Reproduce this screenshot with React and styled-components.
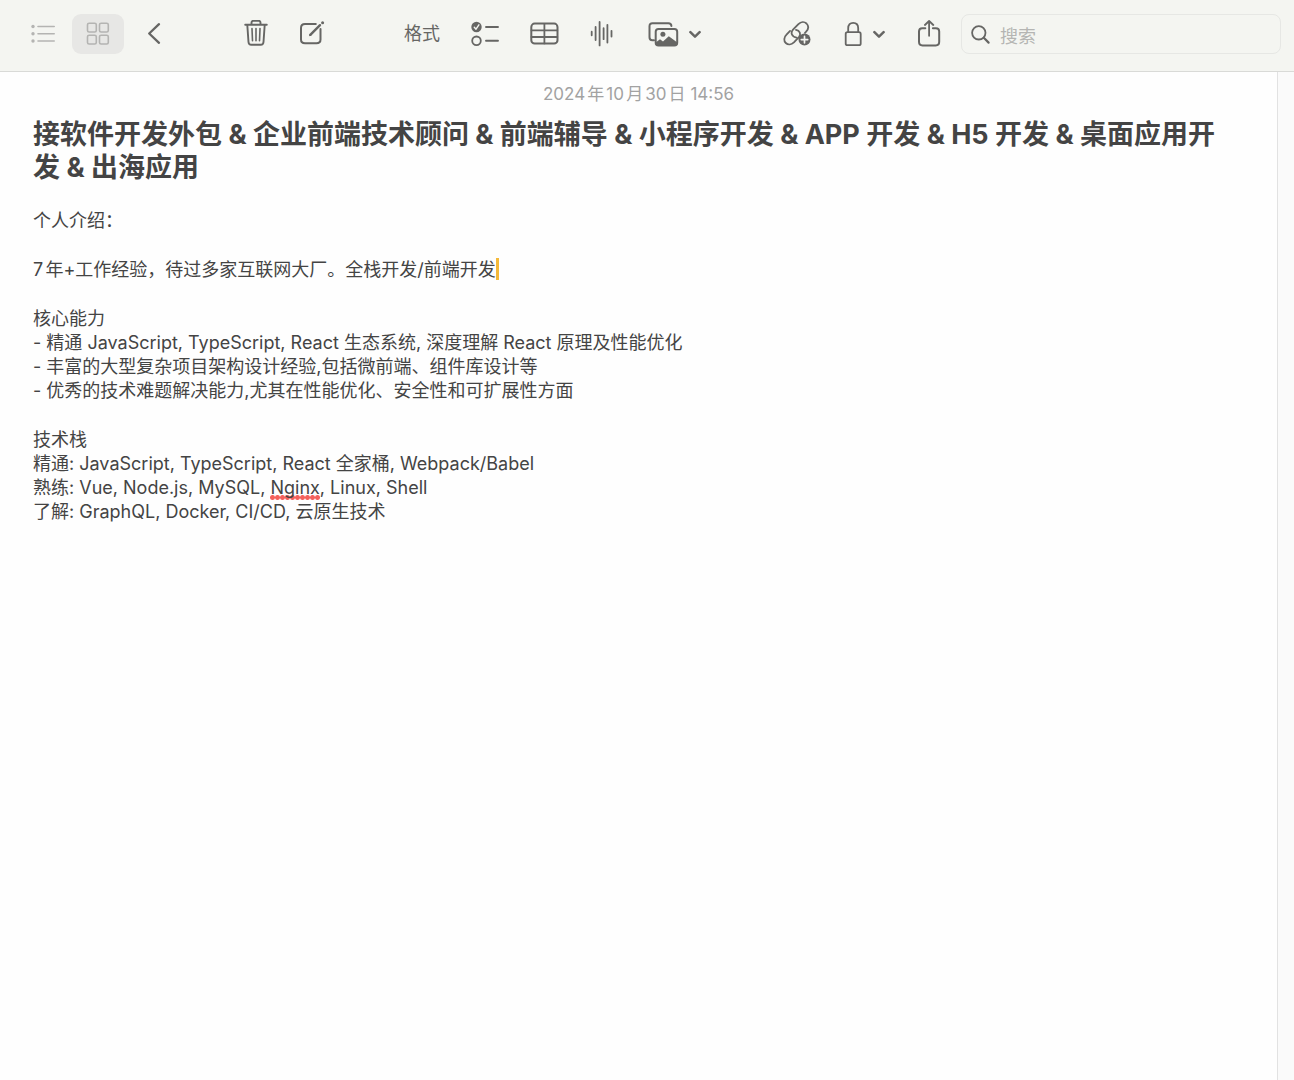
import React from "react";
import styled, { createGlobalStyle } from "styled-components";

const GlobalStyle = createGlobalStyle`
  *, *::before, *::after { box-sizing: border-box; }
  body {
    margin: 0;
    background: #fff;
    color: #444;
    font-family: Inter, "Noto Sans CJK SC", sans-serif;
    font-size: 18px;
    line-height: 24px;
    text-autospace: normal;
  }
`;

const Window = styled.div`
  min-height: 100vh;
  display: flex;
  flex-direction: column;
`;

const Toolbar = styled.header`
  display: flex;
  align-items: center;
  gap: 6px;
  padding: 14px 13px 17px 17px;
  background: #f4f5f1;
  border-bottom: 1px solid #d9dad7;
`;

const Tools = styled.nav`
  flex: 1;
  display: flex;
  gap: 51px;
`;

const Group = styled.div`
  display: flex;
  gap: ${(p) => (p.$end ? "4px" : "3px")};
  margin-left: ${(p) => (p.$end ? "auto" : "0")};
`;

const ToolButton = styled.button`
  display: flex;
  align-items: center;
  justify-content: center;
  gap: 10px;
  height: 40px;
  padding: 0 14px;
  border: 0;
  border-radius: 9px;
  background: ${(p) => (p.$active ? "#e7e7e5" : "transparent")};
  color: ${(p) => (p.$muted ? "#b4b4b2" : "#666664")};
  font: inherit;
`;

const Svg = styled.svg`
  display: block;
  flex: none;
  fill: none;
  stroke: currentColor;
  stroke-width: 2;
  stroke-linecap: round;
  stroke-linejoin: round;
`;

const SearchBox = styled.label`
  display: flex;
  align-items: center;
  gap: 9px;
  width: 320px;
  height: 40px;
  padding: 0 9px;
  border: 1px solid #e6e7e4;
  border-radius: 8px;
  color: #666664;
`;

const SearchInput = styled.input`
  flex: 1;
  min-width: 0;
  padding: 5px 0 0;
  border: 0;
  outline: 0;
  background: transparent;
  color: #444;
  font: inherit;
  &::placeholder { color: #b5b5b3; opacity: 1; }
`;

const Body = styled.div`
  flex: 1;
  display: flex;
`;

const Note = styled.main`
  flex: 1;
  padding: 10px 33px 32px;
  background: #fefefe;
`;

const Gutter = styled.aside`
  width: 17px;
  border-left: 1px solid #e2e2e2;
  background: #fafafa;
`;

const Stamp = styled.time`
  display: block;
  text-align: center;
  color: #a2a2a2;
  font-size: 17px;
`;

const Title = styled.h1`
  margin: 12px 0 25px;
  padding-right: 12px;
  font-size: 27px;
  line-height: 33px;
  font-weight: 700;
`;

const Section = styled.section`
  margin-bottom: 25px;
`;

const Line = styled.p`
  margin: 0;
`;

const Caret = styled.span`
  display: inline-block;
  width: 3px;
  height: 22px;
  vertical-align: top;
  background: #f4b93a;
`;

const Misspelled = styled.span`
  padding-bottom: 2px;
  background: radial-gradient(circle, #f4615c 2px, transparent 3px) left bottom / 5px 5px repeat-x;
`;

function Icon({ w = 28, h = 28, x = 0, children }) {
  return (
    <Svg width={w} height={h} viewBox={`${x} 0 ${w} ${h}`} aria-hidden="true">
      {children}
    </Svg>
  );
}

const ListIcon = () => (
  <Icon w={24}>
    <g fill="currentColor" stroke="none">
      <circle cx="2" cy="6.5" r="1.7" /><circle cx="2" cy="13.7" r="1.7" /><circle cx="2" cy="21" r="1.7" />
    </g>
    <path d="M7 6.5H23.2M7 13.7H23.2M7 21H23.2" style={{ strokeWidth: 1.6 }} />
  </Icon>
);

const GridIcon = () => (
  <Icon w={24}>
    <g style={{ strokeWidth: 1.6 }}>
      <rect x="1.5" y="3.2" width="8.8" height="8.8" rx="1.6" />
      <rect x="13.5" y="3.2" width="8.8" height="8.8" rx="1.6" />
      <rect x="1.5" y="15.2" width="8.8" height="8.8" rx="1.6" />
      <rect x="13.5" y="15.2" width="8.8" height="8.8" rx="1.6" />
    </g>
  </Icon>
);

const BackIcon = () => (
  <Icon w={24}><path d="M18 4.2 8.2 13.5 18 22.8" style={{ strokeWidth: 2.3 }} /></Icon>
);

const TrashIcon = () => (
  <Icon w={24}>
    <path d="M1.2 4.8H22.8M7.5 4.5V2.7C7.5 1.4 8.2.8 9.4.8H14.6C15.8.8 16.5 1.4 16.5 2.7V4.5M3.3 5 4.5 22C4.6 23.9 5.6 24.8 7.3 24.8H16.7C18.4 24.8 19.4 23.9 19.5 22L20.7 5" style={{ strokeWidth: 1.9 }} />
    <path d="M8 8.6 8.5 20.8M12 8.6V20.8M16 8.6 15.5 20.8" style={{ strokeWidth: 1.6 }} />
  </Icon>
);

const ComposeIcon = () => (
  <Icon w={26}>
    <path d="M16.8 4H6C3.4 4 2 5.4 2 8V19.5C2 22.1 3.4 23.3 6 23.3H17.5C20.1 23.3 21.5 22.1 21.5 19.5V9" />
    <path d="M11.3 14.8 21 5.2" style={{ strokeWidth: 2.4 }} />
    <path d="M10.2 16.2 10.8 13.8 12.6 15.4Z" fill="currentColor" stroke="none" />
    <circle cx="23.6" cy="2.7" r="1.5" fill="currentColor" stroke="none" />
  </Icon>
);

const ChecklistIcon = () => (
  <Icon>
    <circle cx="5.5" cy="7" r="5.2" fill="currentColor" stroke="none" />
    <path d="M3.3 7.3 5 9.2 7.9 4.8" stroke="#f4f5f1" style={{ strokeWidth: 1.4 }} />
    <circle cx="5.5" cy="20.8" r="4.3" style={{ strokeWidth: 1.8 }} />
    <path d="M15 7H27M15 20.8H27" style={{ strokeWidth: 1.9 }} />
  </Icon>
);

const TableIcon = () => (
  <Icon w={29}>
    <rect x="1.3" y="3.6" width="26.2" height="20" rx="3.4" />
    <path d="M1.5 10.3H27.3M1.5 17H27.3M14.4 3.8V23.4" style={{ strokeWidth: 1.8 }} />
  </Icon>
);

const WaveIcon = () => (
  <Icon w={24}>
    <path d="M1.7 11.7V15.3M5.6 7V20M9.6 2V25.4M13.6 8.2V19.2M17.4 4.8V22.6M21.5 10.8V16.5" style={{ strokeWidth: 1.8 }} />
  </Icon>
);

const MediaIcon = () => (
  <Icon w={34} x={-3}>
    <path d="M6 20.2H4.4C2.5 20.2 1.5 19.2 1.5 17.3V6.2C1.5 4.3 2.5 3.3 4.4 3.3H20.4C22.3 3.3 23.3 4.2 23.4 6" />
    <rect x="7.7" y="8.9" width="21.5" height="16.6" rx="2.8" />
    <circle cx="14.9" cy="14.3" r="2.5" fill="currentColor" stroke="none" />
    <path d="M8 22.3 12 19.2 15 21.4 20.8 16.2 29 22.3V23.5C29 25 28.2 25.7 27 25.7H10C8.8 25.7 8 25 8 23.5Z" fill="currentColor" stroke="none" />
  </Icon>
);

const ChevronIcon = () => (
  <Icon w={12}><path d="M1.4 12.2 6 16.6 10.6 12.2" style={{ strokeWidth: 2.5 }} /></Icon>
);

const LinkIcon = () => (
  <Icon>
    <path d="M13.6 17.6C9.1 17.2 7.1 13 10 9.7L15.4 4.1C18 1.6 21.3 1.4 23.5 3.5C25.7 5.8 25.6 9 23.1 11.7L22 12.8" style={{ strokeWidth: 1.8 }} />
    <path d="M7.1 10.9 3.5 14.7C.8 17.4.6 20.9 2.8 23C5 25.1 8.3 24.9 10.9 22.4L15.9 17.2C18.5 14.2 16.7 10.4 13 9.8" style={{ strokeWidth: 1.8 }} />
    <circle cx="21.5" cy="19.6" r="6" fill="currentColor" stroke="none" />
    <path d="M21.5 16.4V22.8M18.3 19.6H24.7" stroke="#f4f5f1" style={{ strokeWidth: 1.7 }} />
  </Icon>
);

const LockIcon = () => (
  <Icon w={20}>
    <rect x="2.7" y="12.2" width="15" height="13" rx="1.8" style={{ strokeWidth: 1.8 }} />
    <path d="M5.2 12V8.3C5.2 4.8 7.2 2.8 10.2 2.8S15.2 4.8 15.2 8.3V12" style={{ strokeWidth: 1.8 }} />
  </Icon>
);

const ShareIcon = () => (
  <Icon w={24}>
    <path d="M8.3 8.3H5.3C3 8.3 2 9.3 2 11.6V21.8C2 24.3 3.2 25.4 5.5 25.4H18.7C21 25.4 22.2 24.3 22.2 21.8V11.6C22.2 9.3 21.2 8.3 18.9 8.3H15.9" />
    <path d="M12.1 15.8V1.3M7.9 5 12.1 1 16.3 5" style={{ strokeWidth: 1.8 }} />
  </Icon>
);

const SearchIcon = () => (
  <Icon w={20}>
    <circle cx="7.8" cy="12.8" r="6.7" style={{ strokeWidth: 1.8 }} />
    <path d="M12.8 17.8 17.6 22.6" style={{ strokeWidth: 2.2 }} />
  </Icon>
);

export default function App() {
  return (
    <Window>
      <GlobalStyle />
      <Toolbar>
        <Tools>
          <Group>
            <ToolButton type="button" $muted aria-label="列表"><ListIcon /></ToolButton>
            <ToolButton type="button" $muted $active aria-label="网格"><GridIcon /></ToolButton>
            <ToolButton type="button" aria-label="返回"><BackIcon /></ToolButton>
          </Group>
          <Group>
            <ToolButton type="button" aria-label="删除"><TrashIcon /></ToolButton>
            <ToolButton type="button" aria-label="新建备忘录"><ComposeIcon /></ToolButton>
          </Group>
          <Group>
            <ToolButton type="button">格式</ToolButton>
            <ToolButton type="button" aria-label="核对清单"><ChecklistIcon /></ToolButton>
            <ToolButton type="button" aria-label="表格"><TableIcon /></ToolButton>
            <ToolButton type="button" aria-label="录音"><WaveIcon /></ToolButton>
            <ToolButton type="button" aria-label="媒体"><MediaIcon /><ChevronIcon /></ToolButton>
          </Group>
          <Group $end>
            <ToolButton type="button" aria-label="链接"><LinkIcon /></ToolButton>
            <ToolButton type="button" aria-label="锁定"><LockIcon /><ChevronIcon /></ToolButton>
            <ToolButton type="button" aria-label="共享"><ShareIcon /></ToolButton>
          </Group>
        </Tools>
        <SearchBox>
          <SearchIcon />
          <SearchInput type="text" placeholder="搜索" aria-label="搜索" />
        </SearchBox>
      </Toolbar>
      <Body>
        <Note>
          <Stamp dateTime="2024-10-30T14:56">2024年10月30日 14:56</Stamp>
          <Title>
            接软件开发外包 &amp; 企业前端技术顾问 &amp; 前端辅导 &amp; 小程序开发 &amp; APP 开发 &amp; H5 开发 &amp; 桌面应用开发 &amp; 出海应用
          </Title>
          <Section>
            <Line>个人介绍：</Line>
          </Section>
          <Section>
            <Line>7年+工作经验，待过多家互联网大厂。全栈开发/前端开发<Caret /></Line>
          </Section>
          <Section>
            <Line>核心能力</Line>
            <Line>- 精通 JavaScript, TypeScript, React 生态系统, 深度理解 React 原理及性能优化</Line>
            <Line>- 丰富的大型复杂项目架构设计经验,包括微前端、组件库设计等</Line>
            <Line>- 优秀的技术难题解决能力,尤其在性能优化、安全性和可扩展性方面</Line>
          </Section>
          <Section>
            <Line>技术栈</Line>
            <Line>精通: JavaScript, TypeScript, React 全家桶, Webpack/Babel</Line>
            <Line>熟练: Vue, Node.js, MySQL, <Misspelled>Nginx</Misspelled>, Linux, Shell</Line>
            <Line>了解: GraphQL, Docker, CI/CD, 云原生技术</Line>
          </Section>
        </Note>
        <Gutter />
      </Body>
    </Window>
  );
}
